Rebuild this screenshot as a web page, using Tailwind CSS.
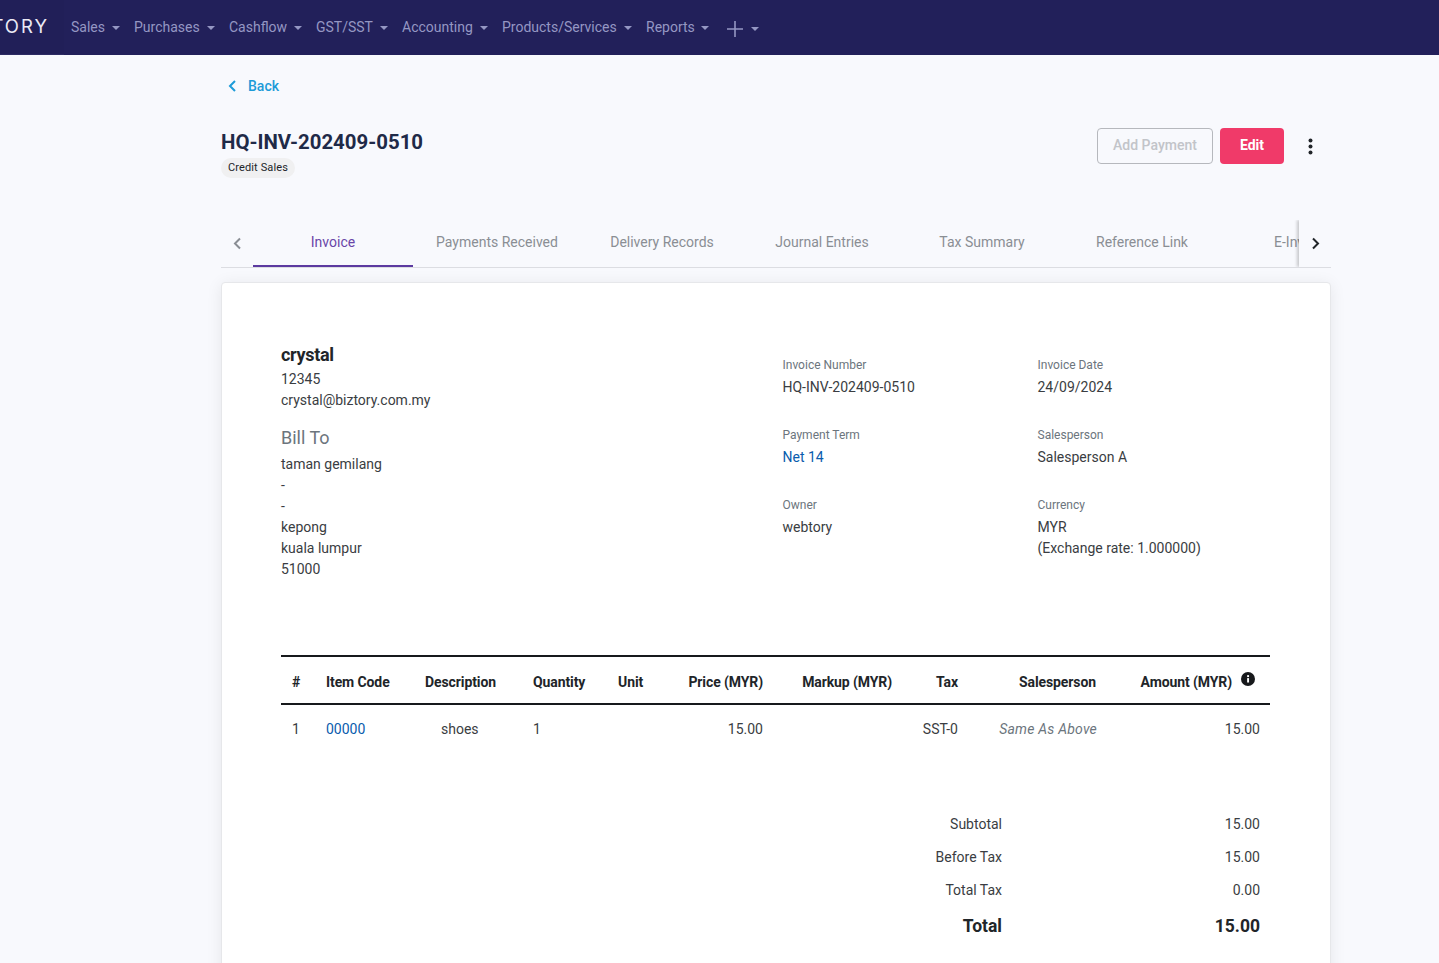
<!DOCTYPE html>
<html><head><meta charset="utf-8"><title>Invoice</title>
<script src="https://cdn.jsdelivr.net/npm/@tailwindcss/browser@4"></script></head>
<body class="bg-[#f8f9fd] font-['Roboto',sans-serif] text-[14px] text-[#3a3d42] overflow-hidden h-[963px]">
<nav class="h-[55px] bg-[#22205a] flex items-center text-[#9597c3] text-[14px] overflow-hidden">
  <div class="w-[64px] h-[55px] shrink-0 overflow-hidden flex items-center justify-end pr-[15px] bg-[#211f58] border-b border-[#2d2b64] pb-[1px]"><span class="text-[#eceaf5] text-[18.5px] tracking-[2px] font-normal leading-none whitespace-nowrap font-['Inter',sans-serif]">TORY</span></div>
  <div class="flex items-center pl-[7px] -mt-[1px]">
    <a class="flex items-center w-[63px]">Sales<i class="ml-[7px] border-x-[4px] border-x-transparent border-t-[4px] border-t-[#9597c3] mt-[1px]"></i></a>
    <a class="flex items-center w-[95px]">Purchases<i class="ml-[7px] border-x-[4px] border-x-transparent border-t-[4px] border-t-[#9597c3] mt-[1px]"></i></a>
    <a class="flex items-center w-[87px]">Cashflow<i class="ml-[7px] border-x-[4px] border-x-transparent border-t-[4px] border-t-[#9597c3] mt-[1px]"></i></a>
    <a class="flex items-center w-[86px]">GST/SST<i class="ml-[7px] border-x-[4px] border-x-transparent border-t-[4px] border-t-[#9597c3] mt-[1px]"></i></a>
    <a class="flex items-center w-[100px]">Accounting<i class="ml-[7px] border-x-[4px] border-x-transparent border-t-[4px] border-t-[#9597c3] mt-[1px]"></i></a>
    <a class="flex items-center w-[144px]">Products/Services<i class="ml-[7px] border-x-[4px] border-x-transparent border-t-[4px] border-t-[#9597c3] mt-[1px]"></i></a>
    <a class="flex items-center w-[81px]">Reports<i class="ml-[6px] border-x-[4px] border-x-transparent border-t-[4px] border-t-[#9597c3] mt-[1px]"></i></a>
    <a class="flex items-center mt-[3px]"><svg width="16" height="16" viewBox="0 0 16 16" stroke="#9597c3" stroke-width="1.6"><path d="M8 0v16M0 8h16"/></svg><i class="ml-[8px] border-x-[4px] border-x-transparent border-t-[4px] border-t-[#9597c3]"></i></a>
  </div>
</nav>
<main class="w-[1110px] ml-[221px]">
  <a class="flex items-center h-[20px] mt-[21px] ml-[7px] text-[#1d9bd8] font-medium"><svg width="9" height="14" viewBox="0 0 9 14" fill="none" stroke="#1d9bd8" stroke-width="2"><path d="M7 2 2 7l5 5"/></svg><span class="ml-[11px]">Back</span></a>
  <header class="flex justify-between mt-[32px] h-[93px]">
    <div>
      <h1 class="text-[20.4px] leading-[28px] font-bold text-[#1f2a48] mt-[0px]">HQ-INV-202409-0510</h1>
      <span class="inline-block h-[20px] leading-[20px] px-[7px] rounded-full bg-[#f0f0f1] text-[11px] text-[#212529] tracking-[0.12px]">Credit Sales</span>
    </div>
    <div class="flex items-start">
      <button class="w-[116px] h-[36px] rounded-[4px] border border-[#b6b8bd] text-[#c2c4c9] font-medium pb-[2px]">Add Payment</button>
      <button class="w-[64px] h-[36px] rounded-[4px] bg-[#f03a69] text-white font-bold ml-[7px] pb-[2px]">Edit</button>
      <svg class="ml-[24px] mt-[10px] mr-[18px]" width="5" height="17" viewBox="0 0 5 17" fill="#212529"><circle cx="2.5" cy="2.5" r="2"/><circle cx="2.5" cy="8.5" r="2"/><circle cx="2.5" cy="14.5" r="2"/></svg>
    </div>
  </header>
  <div class="mt-[-1px] h-[48px] border-b border-[#dcdde2] flex relative overflow-hidden text-[#8a8e94]">
    <div class="w-[32px] flex items-center justify-center"><svg width="9" height="13" viewBox="0 0 9 13" fill="none" stroke="#8a8e94" stroke-width="2"><path d="M7 1.5 2 6.5l5 5"/></svg></div>
    <div class="w-[160px] h-[47px] flex items-center justify-center text-[#6a46a8] border-b-2 border-[#5c3aa0] pb-[1px]">Invoice</div>
    <div class="w-[160px] flex items-center justify-center pb-[2px] ml-[4px] -mr-[4px]">Payments Received</div>
    <div class="w-[160px] flex items-center justify-center pb-[2px] ml-[9px] -mr-[9px]">Delivery Records</div>
    <div class="w-[160px] flex items-center justify-center pb-[2px] ml-[9px] -mr-[9px]">Journal Entries</div>
    <div class="w-[160px] flex items-center justify-center pb-[2px] ml-[9px] -mr-[9px]">Tax Summary</div>
    <div class="w-[160px] flex items-center justify-center pb-[2px] ml-[9px] -mr-[9px]">Reference Link</div>
    <div class="absolute left-[1053px] top-0 h-full flex items-center pb-[2px] whitespace-nowrap">E-Invoice</div>
    <div class="absolute right-0 top-0 w-[32px] h-[47px] bg-[#f8f9fd] shadow-[-2px_0_3px_rgba(0,0,0,0.2)] flex items-center justify-center"><svg width="9" height="13" viewBox="0 0 9 13" fill="none" stroke="#212529" stroke-width="2"><path d="M2 1.5l5 5-5 5"/></svg></div>
  </div>
  <section class="mt-[14px] bg-white rounded-[4px] border border-[#e6e7ea] shadow-[0_2px_16px_rgba(0,0,0,0.08)] h-[800px] px-[59px] pt-[60px]">
    <div class="flex h-[312px]">
      <div class="w-[501.5px] leading-[21px]">
        <div class="text-[18px] font-bold leading-[24px] tracking-[-0.3px] text-[#212529]">crystal</div>
        <div class="mt-[2px]">12345</div>
        <div>crystal@biztory.com.my</div>
        <div class="text-[18px] text-[#6c757d] mt-[15px] leading-[24px]">Bill To</div>
        <div class="mt-[4px]">taman gemilang</div>
        <div>-</div><div>-</div>
        <div>kepong</div><div>kuala lumpur</div><div>51000</div>
      </div>
      <div class="grid grid-cols-[255px_1fr] auto-rows-[70px] pt-[14px] leading-[21px]">
        <div><div class="text-[12px] text-[#6c757d] leading-[16px] mb-[4px]">Invoice Number</div>HQ-INV-202409-0510</div>
        <div><div class="text-[12px] text-[#6c757d] leading-[16px] mb-[4px]">Invoice Date</div>24/09/2024</div>
        <div><div class="text-[12px] text-[#6c757d] leading-[16px] mb-[4px]">Payment Term</div><span class="text-[#0a5cad]">Net 14</span></div>
        <div><div class="text-[12px] text-[#6c757d] leading-[16px] mb-[4px]">Salesperson</div>Salesperson A</div>
        <div><div class="text-[12px] text-[#6c757d] leading-[16px] mb-[4px]">Owner</div>webtory</div>
        <div><div class="text-[12px] text-[#6c757d] leading-[16px] mb-[4px]">Currency</div>MYR<br>(Exchange rate: 1.000000)</div>
      </div>
    </div>
    <table class="w-[989px] table-fixed border-collapse">
      <colgroup><col class="w-[35px]"><col class="w-[99px]"><col class="w-[108px]"><col class="w-[85px]"><col class="w-[60px]"><col class="w-[105px]"><col class="w-[129px]"><col class="w-[66px]"><col class="w-[139px]"><col class="w-[163px]"></colgroup>
      <thead><tr class="h-[48px] border-y-2 border-[#17191c] text-[14px] text-[#212529] tracking-[-0.1px]">
        <th class="pl-[11px] pt-[5px] text-left font-bold">#</th><th class="pl-[10px] pt-[5px] text-left font-bold">Item Code</th><th class="pl-[10px] pt-[5px] text-left font-bold">Description</th><th class="pl-[10px] pt-[5px] text-left font-bold">Quantity</th><th class="pl-[10px] pt-[5px] text-left font-bold">Unit</th>
        <th class="pr-[10px] pt-[5px] text-right font-bold">Price (MYR)</th><th class="pr-[10px] pt-[5px] text-right font-bold">Markup (MYR)</th><th class="pr-[10px] pt-[5px] text-right font-bold">Tax</th><th class="pr-[11px] pt-[5px] text-right font-bold">Salesperson</th>
        <th class="pr-[15px] pt-[5px] text-right font-bold"><span class="inline-flex items-start">Amount (MYR)<svg class="ml-[9px] mt-[0px]" width="14" height="14" viewBox="0 0 16 16"><circle cx="8" cy="8" r="8" fill="#17191c"/><rect x="7" y="7" width="2.2" height="5" fill="#fff"/><rect x="7" y="3.6" width="2.2" height="2.2" fill="#fff"/></svg></span></th>
      </tr></thead>
      <tbody><tr class="h-[50px]">
        <td class="pl-[11px]">1</td><td class="pl-[10px] text-[#0a5cad]">00000</td><td class="pl-[26px]">shoes</td><td class="pl-[10px]">1</td><td></td>
        <td class="pr-[10px] text-right">15.00</td><td></td><td class="pr-[10px] text-right">SST-0</td><td class="pr-[10px] text-right italic tracking-[0.2px] text-[#6c757d]">Same As Above</td><td class="pr-[10px] text-right">15.00</td>
      </tr></tbody>
    </table>
    <div class="mt-[54px] w-[979px] grid grid-cols-[721px_258px] auto-rows-[33px] items-center text-right">
      <div>Subtotal</div><div>15.00</div>
      <div>Before Tax</div><div>15.00</div>
      <div>Total Tax</div><div>0.00</div>
      <div class="text-[17.5px] font-bold leading-[40px] text-[#212529] mt-[5px]">Total</div><div class="text-[17.5px] font-bold leading-[40px] text-[#212529] mt-[5px]">15.00</div>
    </div>
  </section>
</main>
</body></html>
